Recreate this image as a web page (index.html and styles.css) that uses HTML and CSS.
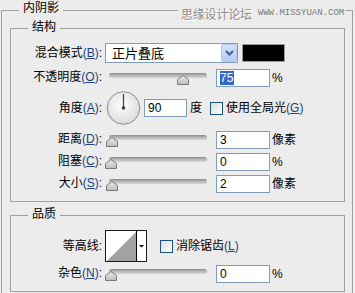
FILE: index.html
```html
<!DOCTYPE html>
<html lang="zh-CN">

<head>
    <meta charset="UTF-8">
    <title>内阴影</title>
    <link rel="stylesheet" href="styles.css">
</head>

<body>
    <div class="watermark"><span class="wm-cn">思缘设计论坛</span><span class="wm-en">WWW.MISSYUAN.COM</span></div>
    <fieldset class="panel">
        <legend>内阴影</legend>

        <fieldset class="group group-structure">
            <legend>结构</legend>

            <div class="row row-blend">
                <span class="label">混合模式<span class="key">(<u>B</u>)</span>:</span>
                <div class="combo">
                    <span class="combo-text">正片叠底</span>
                    <span class="combo-btn">
                        <svg width="9" height="6" viewBox="0 0 9 6"><path d="M1 1 L4.5 4.5 L8 1" fill="none" stroke="#4d6185" stroke-width="2"/></svg>
                    </span>
                </div>
                <div class="swatch"></div>
            </div>

            <div class="row row-slider row-opacity">
                <span class="label">不透明度<span class="key">(<u>O</u>)</span>:</span>
                <div class="slider">
                    <div class="track"></div>
                    <svg class="thumb" style="left: 72px" width="12" height="10" viewBox="0 0 12 10"><polygon points="0.5,4.5 6,0.5 11.5,4.5 11.5,9.5 0.5,9.5" fill="url(#thumbFill)" stroke="#7a7a7a"/></svg>
                </div>
                <div class="field"><span class="selected">75</span></div>
                <span class="unit">%</span>
            </div>

            <div class="row row-angle">
                <span class="label">角度<span class="key">(<u>A</u>)</span>:</span>
                <svg class="dial" width="35" height="34" viewBox="0 0 35 34">
                    <defs>
                        <radialGradient id="dialFill" cx="0.45" cy="0.4" r="0.7">
                            <stop offset="0" stop-color="#ffffff"/>
                            <stop offset="1" stop-color="#d4d4d4"/>
                        </radialGradient>
                        <linearGradient id="thumbFill" x1="0" y1="0" x2="0" y2="1">
                            <stop offset="0" stop-color="#ececec"/>
                            <stop offset="1" stop-color="#bcbcbc"/>
                        </linearGradient>
                    </defs>
                    <circle cx="17.5" cy="17" r="16.3" fill="url(#dialFill)" stroke="#8e8e8e"/>
                    <line x1="17.5" y1="17" x2="17.5" y2="3" stroke="#4a4a4a" stroke-width="1.3"/>
                    <circle cx="17.5" cy="17" r="1.8" fill="#3a3a3a"/>
                </svg>
                <div class="field field-angle">90</div>
                <span class="unit">度</span>
                <span class="check"></span>
                <span class="check-text">使用全局光<span class="key">(<u>G</u>)</span></span>
            </div>

            <div class="row row-slider row-distance">
                <span class="label">距离<span class="key">(<u>D</u>)</span>:</span>
                <div class="slider">
                    <div class="track"></div>
                    <svg class="thumb" style="left: 1px" width="12" height="10" viewBox="0 0 12 10"><polygon points="0.5,4.5 6,0.5 11.5,4.5 11.5,9.5 0.5,9.5" fill="url(#thumbFill)" stroke="#7a7a7a"/></svg>
                </div>
                <div class="field">3</div>
                <span class="unit">像素</span>
            </div>

            <div class="row row-slider row-tight">
                <span class="label">阻塞<span class="key">(<u>C</u>)</span>:</span>
                <div class="slider">
                    <div class="track"></div>
                    <svg class="thumb" style="left: 0px" width="12" height="10" viewBox="0 0 12 10"><polygon points="0.5,4.5 6,0.5 11.5,4.5 11.5,9.5 0.5,9.5" fill="url(#thumbFill)" stroke="#7a7a7a"/></svg>
                </div>
                <div class="field">0</div>
                <span class="unit">%</span>
            </div>

            <div class="row row-slider row-tight">
                <span class="label">大小<span class="key">(<u>S</u>)</span>:</span>
                <div class="slider">
                    <div class="track"></div>
                    <svg class="thumb" style="left: 1px" width="12" height="10" viewBox="0 0 12 10"><polygon points="0.5,4.5 6,0.5 11.5,4.5 11.5,9.5 0.5,9.5" fill="url(#thumbFill)" stroke="#7a7a7a"/></svg>
                </div>
                <div class="field">2</div>
                <span class="unit">像素</span>
            </div>
        </fieldset>

        <fieldset class="group group-quality">
            <legend>品质</legend>

            <div class="row row-contour">
                <span class="label">等高线:</span>
                <div class="contour">
                    <svg width="40" height="30" viewBox="0 0 40 30">
                        <rect x="0" y="0" width="40" height="30" fill="#ffffff"/>
                        <polygon points="1,30 30,1 30,30" fill="#a2a2a2"/>
                        <line x1="30.5" y1="0" x2="30.5" y2="30" stroke="#000"/>
                        <polygon points="33,14 38,14 35.5,16.5" fill="#000"/>
                    </svg>
                </div>
                <span class="check check-aa"></span>
                <span class="check-text">消除锯齿<span class="key">(<u>L</u>)</span></span>
            </div>

            <div class="row row-slider row-noise">
                <span class="label">杂色<span class="key">(<u>N</u>)</span>:</span>
                <div class="slider">
                    <div class="track"></div>
                    <svg class="thumb" style="left: 0px" width="12" height="10" viewBox="0 0 12 10"><polygon points="0.5,4.5 6,0.5 11.5,4.5 11.5,9.5 0.5,9.5" fill="url(#thumbFill)" stroke="#7a7a7a"/></svg>
                </div>
                <div class="field">0</div>
                <span class="unit">%</span>
            </div>
        </fieldset>
    </fieldset>
</body>

</html>
```

FILE: styles.css
```css
body {
    margin: 0;
    width: 355px;
    height: 293px;
    overflow: hidden;
    position: relative;
    background-color: #ececec;
    color: #000;
    font-family: "Liberation Sans", "Noto Sans CJK SC", sans-serif;
    font-size: 12px;
    line-height: 16px;
}

/* watermark over the top frame line */
.watermark {
    position: absolute;
    top: 6px;
    left: 178px;
    width: 167px;
    height: 15px;
    padding-left: 3px;
    box-sizing: border-box;
    background-color: #ececec;
    display: flex;
    align-items: center;
    white-space: nowrap;
    z-index: 2;
}

.wm-cn {
    flex-shrink: 0;
    color: #8c8c8c;
    font-family: "Noto Sans CJK SC", sans-serif;
    font-size: 12px;
    line-height: 15px;
    letter-spacing: -0.2px;
    text-shadow: 1px 1px 0 #ffffff;
}

.wm-en {
    flex-shrink: 0;
    margin-left: 6px;
    color: #7a7a7a;
    font-family: "Liberation Mono", monospace;
    font-size: 9px;
    line-height: 15px;
}

.panel {
    margin: 0 0 0 1px;
    width: 352px;
    box-sizing: border-box;
    border: 1px solid #a0a0a0;
    padding: 0 7px 10px 8px;
    min-inline-size: 0;
}

.panel > legend {
    margin-left: 9px;
    padding: 0 4px 4px;
    line-height: 16px;
}

.group {
    margin: 0;
    border: 1px solid #a0a0a0;
    padding: 0 0 8px 0;
    min-inline-size: 0;
}

.group > legend {
    margin-left: 17px;
    padding: 0 4px 3px;
    line-height: 16px;
}

.group-structure {
    margin-top: -1px;
}

.group-quality {
    margin-top: 4px;
}

.row {
    display: flex;
    align-items: center;
}

.label {
    flex-shrink: 0;
    width: 91px;
    margin-right: 3px;
    text-align: right;
    white-space: nowrap;
}

.row-slider .label {
    margin-bottom: 2px;
}

.key {
    color: #22407e;
}

.key u {
    text-underline-offset: 1px;
}

.row-blend {
    height: 20px;
    margin-top: 5px;
}

.row-opacity {
    height: 18px;
    margin-top: 6px;
}

.row-angle {
    height: 34px;
    margin-top: 4px;
}

.row-distance {
    height: 18px;
    margin-top: 6px;
}

.row-tight {
    height: 18px;
    margin-top: 4px;
}

.row-contour {
    height: 32px;
    margin-top: 5px;
}

.row-noise {
    height: 18px;
    margin-top: 3px;
}

/* blend mode combo */
.combo {
    width: 133px;
    height: 20px;
    box-sizing: border-box;
    border: 1px solid #7f9db9;
    background: #fff;
    display: flex;
    align-items: center;
    justify-content: space-between;
}

.combo-text {
    padding-left: 6px;
    font-family: "Noto Sans CJK SC", sans-serif;
    font-size: 13px;
}

.combo-btn {
    width: 16px;
    height: 18px;
    box-sizing: border-box;
    border: 1px solid #b4c8f4;
    border-radius: 2px;
    background: linear-gradient(#d4e1fd, #b6cbf8);
    display: flex;
    align-items: center;
    justify-content: center;
}

.swatch {
    width: 43px;
    height: 18px;
    margin-left: 4px;
    box-sizing: border-box;
    border: 1px solid #9a9a9a;
    background: #000;
}

/* sliders */
.slider {
    position: relative;
    width: 106px;
    height: 18px;
    flex-shrink: 0;
}

.track {
    margin: 4px 4px 0;
    height: 5px;
    border-radius: 3px;
    background: linear-gradient(#8a8a8a, #b8b8b8 50%, #d6d6d6);
}

.thumb {
    position: absolute;
    top: 6px;
    display: block;
}

.field {
    width: 54px;
    height: 18px;
    margin-left: 5px;
    box-sizing: border-box;
    border: 1px solid #7f9db9;
    background: #fff;
    padding-left: 3px;
    line-height: 16px;
    flex-shrink: 0;
}

.selected {
    background: #316ac5;
    color: #fff;
    padding: 0 1px 0 0;
}

.unit {
    margin-left: 2px;
    white-space: nowrap;
}

/* angle */
.dial {
    display: block;
    margin-left: 1px;
    flex-shrink: 0;
}

.field-angle {
    width: 43px;
    margin-left: 3px;
}

.row-angle .unit {
    margin-left: 3px;
}

.check {
    width: 13px;
    height: 13px;
    box-sizing: border-box;
    border: 1px solid #1c5180;
    background: linear-gradient(135deg, #dcdcd7, #ffffff);
    margin-left: 8px;
    flex-shrink: 0;
}

.check-text {
    margin-left: 3px;
    white-space: nowrap;
}

/* contour */
.contour {
    width: 42px;
    height: 32px;
    box-sizing: border-box;
    border: 1px solid #1a1a1a;
    flex-shrink: 0;
}

.contour svg {
    display: block;
}

.check-aa {
    margin-left: 13px;
}
```
